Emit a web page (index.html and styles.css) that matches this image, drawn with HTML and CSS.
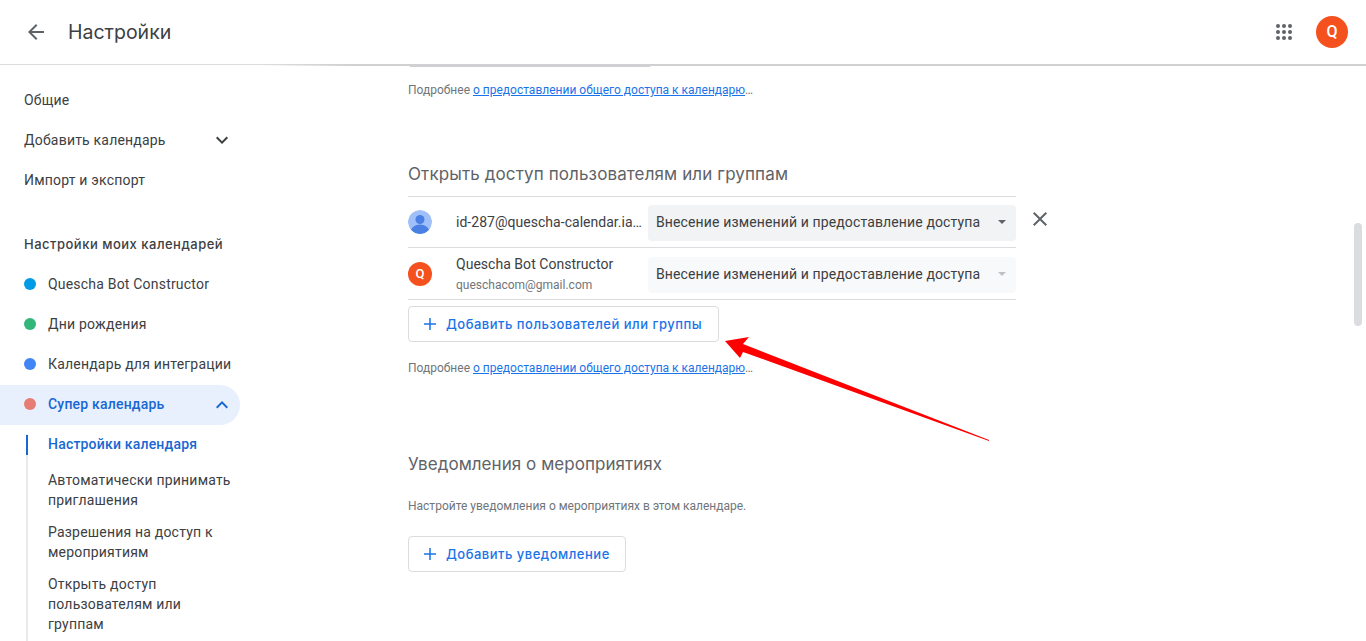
FILE: index.html
```html
<!DOCTYPE html>
<html lang="ru">
<head>
<meta charset="utf-8">
<title>Настройки</title>
<link rel="stylesheet" href="styles.css">
</head>
<body>
<div class="app">
  <header class="topbar">
    <button class="icon-btn back" aria-label="Назад">
      <svg width="24" height="24" viewBox="0 0 24 24"><path fill="#5f6368" d="M20 11H7.83l5.59-5.59L12 4l-8 8 8 8 1.41-1.41L7.83 13H20v-2z"/></svg>
    </button>
    <h1 class="title">Настройки</h1>
    <button class="icon-btn apps" aria-label="Приложения">
      <svg width="24" height="24" viewBox="0 0 24 24" fill="#5f6368"><circle cx="6" cy="6" r="2"/><circle cx="12" cy="6" r="2"/><circle cx="18" cy="6" r="2"/><circle cx="6" cy="12" r="2"/><circle cx="12" cy="12" r="2"/><circle cx="18" cy="12" r="2"/><circle cx="6" cy="18" r="2"/><circle cx="12" cy="18" r="2"/><circle cx="18" cy="18" r="2"/></svg>
    </button>
    <div class="account">Q</div>
  </header>
  <div class="content">
    <nav class="sidebar">
      <a class="nav-item">Общие</a>
      <a class="nav-item has-chevron">Добавить календарь
        <svg class="chevron" width="24" height="24" viewBox="0 0 24 24"><path fill="#3c4043" d="M7.41 8.59 12 13.17l4.59-4.58L18 10l-6 6-6-6z"/></svg>
      </a>
      <a class="nav-item">Импорт и экспорт</a>
      <div class="nav-heading">Настройки моих календарей</div>
      <a class="nav-item cal"><span class="dot dot-blue"></span>Quescha Bot Constructor</a>
      <a class="nav-item cal"><span class="dot dot-green"></span>Дни рождения</a>
      <a class="nav-item cal"><span class="dot dot-indigo"></span>Календарь для интеграции</a>
      <a class="nav-item cal active"><span class="dot dot-red"></span>Супер календарь
        <svg class="chevron" width="24" height="24" viewBox="0 0 24 24"><path fill="#1967d2" d="M12 8l-6 6 1.41 1.41L12 10.83l4.59 4.58L18 14z"/></svg>
      </a>
      <div class="subnav">
        <a class="sub-item current">Настройки календаря</a>
        <a class="sub-item">Автоматически принимать приглашения</a>
        <a class="sub-item">Разрешения на доступ к мероприятиям</a>
        <a class="sub-item">Открыть доступ пользователям или группам</a>
      </div>
    </nav>
    <main class="main">
      <div class="clipped-button"></div>
      <p class="note first-note">Подробнее <a class="link">о предоставлении общего доступа к календарю</a>…</p>
      <h2 class="section-title share-title">Открыть доступ пользователям или группам</h2>
      <div class="share-wrap">
        <div class="share-list">
          <div class="share-row">
            <svg class="avatar" width="24" height="24" viewBox="0 0 24 24"><defs><clipPath id="av"><circle cx="12" cy="12" r="12"/></clipPath></defs><g clip-path="url(#av)"><rect width="24" height="24" fill="#a1c0fa"/><circle cx="12" cy="9.5" r="4.5" fill="#4a7fe3"/><ellipse cx="12" cy="21" rx="9" ry="6.5" fill="#4a7fe3"/></g></svg>
            <div class="person"><div class="person-name">id-287@quescha-calendar.ia…</div></div>
            <div class="select"><span>Внесение изменений и предоставление доступа</span><i class="caret"></i></div>
          </div>
          <div class="share-row">
            <div class="avatar letter">Q</div>
            <div class="person"><div class="person-name">Quescha Bot Constructor</div><div class="person-mail">queschacom@gmail.com</div></div>
            <div class="select disabled"><span>Внесение изменений и предоставление доступа</span><i class="caret"></i></div>
          </div>
        </div>
        <button class="remove" aria-label="Удалить">
          <svg width="24" height="24" viewBox="0 0 24 24"><path fill="#5f6368" d="M19 6.41 17.59 5 12 10.59 6.41 5 5 6.41 10.59 12 5 17.59 6.41 19 12 13.41 17.59 19 19 17.59 13.41 12z"/></svg>
        </button>
      </div>
      <button class="add-btn add-people">
        <svg width="18" height="18" viewBox="0 0 24 24"><path fill="#1a73e8" d="M20 13h-7v7h-2v-7H4v-2h7V4h2v7h7v2z"/></svg>
        Добавить пользователей или группы
      </button>
      <p class="note second-note">Подробнее <a class="link">о предоставлении общего доступа к календарю</a>…</p>
      <h2 class="section-title notify-title">Уведомления о мероприятиях</h2>
      <p class="note third-note">Настройте уведомления о мероприятиях в этом календаре.</p>
      <button class="add-btn add-notify">
        <svg width="18" height="18" viewBox="0 0 24 24"><path fill="#1a73e8" d="M20 13h-7v7h-2v-7H4v-2h7V4h2v7h7v2z"/></svg>
        Добавить уведомление
      </button>
    </main>
  </div>
  <div class="scroll-thumb"></div>
  <svg class="arrow" width="1366" height="641" viewBox="0 0 1366 641"><polygon fill="#fe0000" points="725,341 749,337 743,344 989,440 989,441 743,352 740,358"/></svg>
</div>
</body>
</html>
```
FILE: styles.css
```css
* { box-sizing: border-box; }
html, body { margin: 0; height: 100%; overflow: hidden; background: #fff; }
body { font-family: Roboto, "Liberation Sans", sans-serif; color: #3c4043; }
.app { position: relative; width: 1366px; height: 641px; overflow: hidden; display: flex; flex-direction: column; }

.topbar { height: 65px; flex: none; display: flex; align-items: center; padding: 0 18px 0 24px; border-bottom: 1px solid #dadce0; position: relative; }
.topbar::after { content: ""; position: absolute; left: 260px; right: 0; top: 64px; height: 2px; background: linear-gradient(90deg, rgba(208,208,210,0) 0, #d0d0d2 90px, #d0d0d2 100%); }
.icon-btn { border: 0; background: none; padding: 0; width: 24px; height: 24px; display: flex; }
.title { margin: 0 0 0 20px; font: 400 19.5px/28px Inter, Roboto, sans-serif; color: #3c4043; flex: 1; }
.apps { margin-right: 20px; }
.account { width: 32px; height: 32px; border-radius: 50%; background: #f4511e; color: #fff; font: 500 16px/32px Roboto, sans-serif; text-align: center; }

.content { flex: 1; display: flex; min-height: 0; }
.sidebar { width: 256px; flex: none; padding: 15px 16px 0 0; }
.nav-item { display: flex; align-items: center; height: 40px; padding-left: 24px; font-size: 14px; letter-spacing: .2px; color: #3c4043; position: relative; }
.chevron { position: absolute; left: 210px; top: 8px; }
.nav-heading { margin-top: 34px; height: 20px; margin-bottom: 10px; padding-left: 24px; font: 500 13px/20px Inter, Roboto, sans-serif; letter-spacing: .5px; color: #3c4043; }
.dot { width: 12px; height: 12px; border-radius: 50%; margin-right: 12px; flex: none; }
.dot-blue { background: #039be5; }
.dot-green { background: #33b679; }
.dot-indigo { background: #4285f4; }
.dot-red { background: #e67c73; }
.cal.active { width: 240px; background: #e8f0fe; color: #1967d2; font-weight: 500; border-radius: 0 20px 20px 0; margin-top: 1px; margin-bottom: -1px; padding-bottom: 2px; }
.subnav { margin: 10px 0 0 26px; border-left: 2px solid #e8eaed; padding: 0 0 20px 20px; display: flex; flex-direction: column; gap: 12px; width: 206px; }
.sub-item { display: block; font-size: 14px; line-height: 20px; letter-spacing: .2px; color: #3c4043; position: relative; }
.sub-item.current { color: #1967d2; font-weight: 500; margin-bottom: 4px; }
.sub-item.current::before { content: ""; position: absolute; left: -22px; top: 1px; width: 2px; height: 20px; background: #1967d2; }

.main { flex: 1; padding-left: 152px; min-width: 0; }
.clipped-button { width: 242px; height: 2px; margin-left: 1px; background: #d0d0d2; border-radius: 0 0 3px 3px; }
.note { margin: 0; font-size: 12px; line-height: 16px; color: #70757a; }
.link { color: #1a73e8; text-decoration: underline; }
.first-note { margin-top: 15px; }
.section-title { margin: 0; font: 400 17px/24px Inter, Roboto, sans-serif; letter-spacing: .12px; color: #5f6368; }
.share-title { margin-top: 64px; }
.notify-title { letter-spacing: .05px; }
.share-wrap { display: flex; margin-top: 10px; }
.share-list { width: 608px; border-top: 1px solid #dadce0; }
.share-row { display: flex; align-items: center; height: 52px; border-bottom: 1px solid #dadce0; }
.share-row:first-child { height: 51px; }
.avatar { width: 24px; height: 24px; flex: none; border-radius: 50%; }
.avatar.letter { background: #f4511e; color: #fff; font: 500 13px/24px Roboto, sans-serif; text-align: center; }
.person { width: 216px; padding-left: 24px; flex: none; }
.person-name { font-size: 14px; line-height: 20px; letter-spacing: .03px; color: #3c4043; white-space: nowrap; }
.person-mail { font-size: 12px; line-height: 16px; color: #70757a; margin-top: 3px; }
.select { width: 368px; height: 36px; flex: none; margin-top: 2px; padding: 0 0 2px 8px; border-radius: 4px; background: #f1f3f4; display: flex; align-items: center; justify-content: space-between; font-size: 14px; letter-spacing: .13px; color: #3c4043; }
.select.disabled { background: #f8f9fa; }
.caret { width: 0; height: 0; border: 4px solid transparent; border-top-color: #5f6368; border-bottom: 0; margin-right: 10px; }
.disabled .caret { border-top-color: #bdc1c6; }
.remove { border: 0; background: none; padding: 0; width: 24px; height: 24px; margin: 11px 0 0 12px; }
.add-btn { display: flex; align-items: center; height: 36px; padding: 0 16px 0 12px; background: #fff; border: 1px solid #dadce0; border-radius: 4px; font: 500 13px/20px Inter, Roboto, sans-serif; letter-spacing: .5px; color: #1a73e8; gap: 7px; }
.add-people { margin-top: 6px; }
.second-note { margin-top: 18px; }
.notify-title { margin-top: 76px; }
.third-note { margin-top: 22px; }
.add-notify { margin-top: 22px; padding-right: 15px; }

.scroll-thumb { position: absolute; left: 1354px; top: 223px; width: 8px; height: 103px; border-radius: 4px; background: #dadce0; }
.arrow { position: absolute; left: 0; top: 0; pointer-events: none; }
```
